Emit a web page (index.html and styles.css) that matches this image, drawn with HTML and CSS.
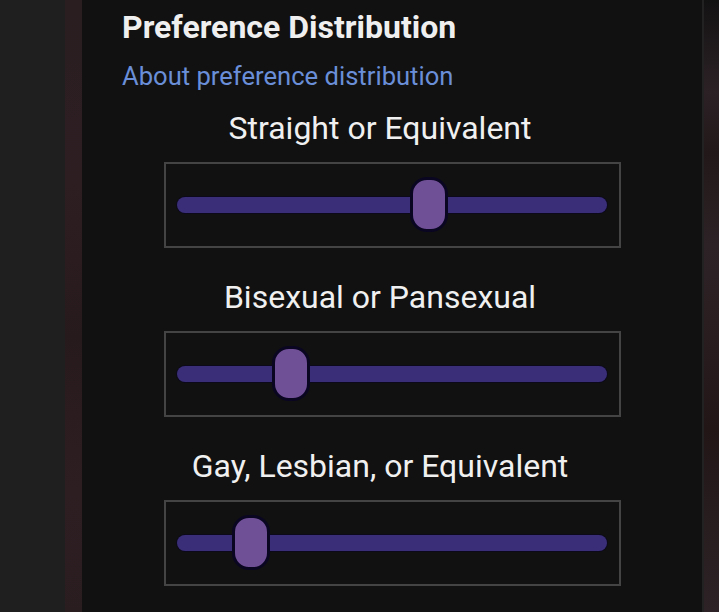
FILE: index.html
```html
<!DOCTYPE html>
<html>
<head>
<meta charset="utf-8">
<link rel="stylesheet" href="styles.css">
</head>
<body>
<div class="page">
  <div class="gutter"></div>
  <div class="strip strip-left"></div>
  <main class="panel">
    <h1 class="title">Preference Distribution</h1>
    <a class="link" href="#">About preference distribution</a>
    <div class="groups">
      <section class="group">
        <div class="label">Straight or Equivalent</div>
        <div class="box"><div class="track"><div class="thumb" style="left: 233px"></div></div></div>
      </section>
      <section class="group">
        <div class="label">Bisexual or Pansexual</div>
        <div class="box"><div class="track"><div class="thumb" style="left: 95px"></div></div></div>
      </section>
      <section class="group">
        <div class="label">Gay, Lesbian, or Equivalent</div>
        <div class="box"><div class="track"><div class="thumb" style="left: 55px"></div></div></div>
      </section>
    </div>
  </main>
  <div class="divider"></div>
  <div class="strip strip-right"></div>
</div>
</body>
</html>
```
FILE: styles.css
```css
html, body {
  margin: 0;
  padding: 0;
  background: #1f1f1f;
  font-family: Roboto, "Noto Sans", sans-serif;
}
.page {
  display: flex;
  height: 612px;
  overflow: hidden;
}
.gutter {
  width: 65px;
  background: #1f1f1f;
}
.strip {
  background: linear-gradient(#2a1e21, #2d1e22 30%, #271a1c 55%, #2d1e22 80%, #2a1d20);
}
.strip-left {
  width: 17px;
}
.panel {
  width: 620px;
  background: #111111;
  display: flex;
  flex-direction: column;
}
.divider {
  width: 2px;
  background: #222222;
}
.strip-right {
  flex: 1;
  background: linear-gradient(#131213, #2c2226 15%, #221819 25%, #2d2326 40%, #2a1d20 55%, #221617 70%, #2d2326 100%);
}
.title {
  margin: 8px 0 0 40px;
  font-size: 32px;
  font-weight: 700;
  line-height: 38px;
  color: #efefef;
}
.link {
  margin: 15px 0 0 40px;
  font-size: 25.6px;
  line-height: 30px;
  color: #6a8fd8;
  text-decoration: none;
}
.groups {
  display: flex;
  flex-direction: column;
  gap: 30px;
  margin-top: 18px;
}
.group {
  display: flex;
  flex-direction: column;
  align-items: center;
}
.label {
  font-size: 32px;
  line-height: 38px;
  color: #f0f0f0;
  margin-right: 24px;
  margin-bottom: 15px;
}
.box {
  width: 453px;
  height: 82px;
  border: 2px solid #444444;
  display: flex;
  align-items: center;
  box-sizing: content-box;
}
.track {
  position: relative;
  margin-left: 11px;
  width: 430px;
  height: 16px;
  border-radius: 8px;
  background: #3a2e78;
  box-shadow: 0 0 0 1px #0c0a1a;
}
.thumb {
  position: absolute;
  top: -20px;
  width: 32px;
  height: 49px;
  border: 3px solid #0a0622;
  border-radius: 17px;
  background: #6f4f95;
}
```
